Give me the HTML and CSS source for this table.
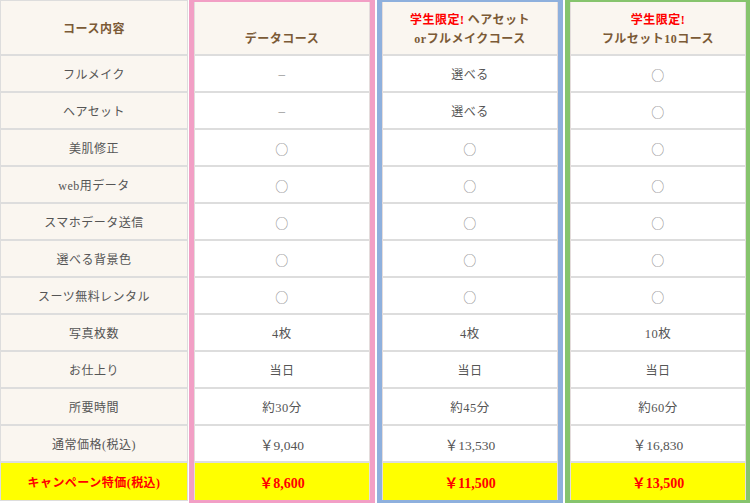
FILE: index.html
```html
<!DOCTYPE html>
<html lang="ja">
<head>
<meta charset="utf-8">
<title>コース内容</title>
<link rel="stylesheet" href="styles.css">
</head>
<body>
<div class="table">
  <div class="col label-col">
    <div class="cell head">コース内容</div>
    <div class="cell">フルメイク</div>
    <div class="cell">ヘアセット</div>
    <div class="cell">美肌修正</div>
    <div class="cell">web用データ</div>
    <div class="cell">スマホデータ送信</div>
    <div class="cell">選べる背景色</div>
    <div class="cell">スーツ無料レンタル</div>
    <div class="cell">写真枚数</div>
    <div class="cell">お仕上り</div>
    <div class="cell">所要時間</div>
    <div class="cell">通常価格(税込)</div>
    <div class="cell campaign">キャンペーン特価(税込)</div>
  </div>

  <div class="col course pink">
    <div class="inner">
      <div class="cell head"><span class="line">&nbsp;</span><span class="line">データコース</span></div>
      <div class="cell dash">–</div>
      <div class="cell dash">–</div>
      <div class="cell circle">○</div>
      <div class="cell circle">○</div>
      <div class="cell circle">○</div>
      <div class="cell circle">○</div>
      <div class="cell circle">○</div>
      <div class="cell num">4枚</div>
      <div class="cell">当日</div>
      <div class="cell num">約30分</div>
      <div class="cell price">￥9,040</div>
      <div class="cell campaign">￥8,600</div>
    </div>
  </div>

  <div class="col course blue">
    <div class="inner">
      <div class="cell head"><span class="line"><span class="red">学生限定!</span> ヘアセット</span><span class="line">orフルメイクコース</span></div>
      <div class="cell">選べる</div>
      <div class="cell">選べる</div>
      <div class="cell circle">○</div>
      <div class="cell circle">○</div>
      <div class="cell circle">○</div>
      <div class="cell circle">○</div>
      <div class="cell circle">○</div>
      <div class="cell num">4枚</div>
      <div class="cell">当日</div>
      <div class="cell num">約45分</div>
      <div class="cell price">￥13,530</div>
      <div class="cell campaign">￥11,500</div>
    </div>
  </div>

  <div class="col course green">
    <div class="inner">
      <div class="cell head"><span class="line red">学生限定!</span><span class="line">フルセット10コース</span></div>
      <div class="cell circle">○</div>
      <div class="cell circle">○</div>
      <div class="cell circle">○</div>
      <div class="cell circle">○</div>
      <div class="cell circle">○</div>
      <div class="cell circle">○</div>
      <div class="cell circle">○</div>
      <div class="cell num">10枚</div>
      <div class="cell">当日</div>
      <div class="cell num">約60分</div>
      <div class="cell price">￥16,830</div>
      <div class="cell campaign">￥13,500</div>
    </div>
  </div>
</div>
</body>
</html>
```

FILE: styles.css
```css
html, body {
  margin: 0;
  padding: 0;
  background: #ffffff;
  overflow: hidden;
}

body {
  font-family: "Liberation Serif", "Noto Sans CJK JP", serif;
  font-size: 12px;
  color: #555555;
  width: 760px;
}

.table {
  display: flex;
  align-items: flex-start;
}

.col {
  box-sizing: border-box;
  display: flex;
  flex-direction: column;
  flex: none;
}

.cell {
  box-sizing: border-box;
  height: 37px;
  padding-top: 3px;
  border-bottom: 2px solid #dddddd;
  display: flex;
  flex-direction: column;
  align-items: center;
  justify-content: center;
  text-align: center;
  letter-spacing: 0.04em;
  line-height: 19px;
}

.cell:last-child {
  border-bottom: none;
}

.head {
  background: #faf6f0;
  color: #7b5a36;
  font-weight: bold;
}

.head .line {
  display: block;
  white-space: nowrap;
}

.red {
  color: #ff0000;
}

.label-col {
  width: 188px;
  margin-right: 1px;
  border: 1px solid #dddddd;
  background: #faf6f0;
}

.label-col .head {
  height: 55px;
}

.course {
  width: 186px;
  border-style: solid;
  border-width: 2px 5px 3px 5px;
  margin-right: 2px;
}

.course .inner {
  display: flex;
  flex-direction: column;
  border-left: 1px solid #e4dcdc;
  border-right: 1px solid #e4dcdc;
  background: #ffffff;
}

.course .head {
  height: 54px;
}

.pink { border-color: #f29fc5; }
.blue { border-color: #8eb0dd; }
.green { border-color: #86c46d; margin-right: 0; }

.circle {
  font-family: "Noto Sans CJK JP", sans-serif;
  color: #888888;
  font-size: 13px;
  padding-top: 1px;
}

.dash {
  color: #888888;
  font-size: 13px;
  padding-top: 0;
  padding-bottom: 1px;
}

.num {
  font-size: 12.5px;
}

.price {
  font-size: 13.5px;
  letter-spacing: 0;
}

.campaign {
  background: #ffff00;
  color: #ff0000;
  font-weight: bold;
}

.course .campaign {
  font-size: 14px;
  letter-spacing: 0;
}
```
